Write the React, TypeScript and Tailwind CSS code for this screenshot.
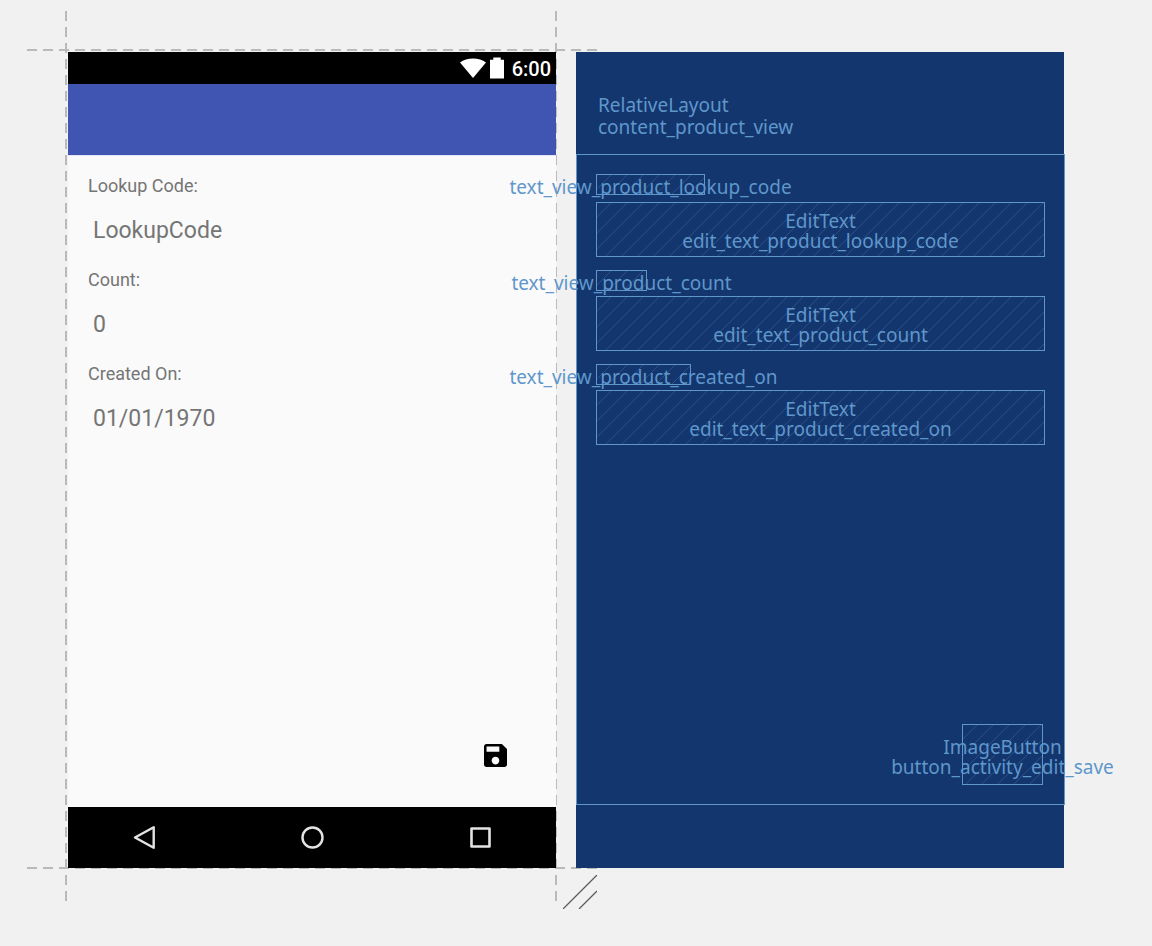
import { useId } from "react";

type Field = {
  id: string;
  label: string;
  value: string;
  viewId: string;
  viewBox: string;
};

const fields: Field[] = [
  { id: "product_lookup_code", label: "Lookup Code:", value: "LookupCode", viewId: "text_view_product_lookup_code", viewBox: "w-[109px] mb-[7px]" },
  { id: "product_count", label: "Count:", value: "0", viewId: "text_view_product_count", viewBox: "w-[51px] mb-[5px]" },
  { id: "product_created_on", label: "Created On:", value: "01/01/1970", viewId: "text_view_product_created_on", viewBox: "w-[95px] mb-[5px]" },
];

function Guides() {
  const horizontal =
    "absolute -left-[41px] -right-[41px] h-[2px] bg-[repeating-linear-gradient(90deg,#bababa_0_10px,transparent_10px_16px)]";
  const vertical =
    "absolute -top-[41px] -bottom-[33px] w-[2px] bg-[repeating-linear-gradient(180deg,#bababa_0_10px,transparent_10px_16px)]";
  return (
    <div aria-hidden="true">
      <div className={`${horizontal} -top-[3px]`} />
      <div className={`${horizontal} -bottom-[1px]`} />
      <div className={`${vertical} -left-[3px]`} />
      <div className={`${vertical} -right-[1px]`} />
      <svg className="absolute -right-[41px] -bottom-[41px] h-[34px] w-[34px]" viewBox="0 0 34 34" stroke="#5c5c5c" strokeWidth="1.3">
        <path d="M0 34 34 0M16 34 34 16" />
      </svg>
    </div>
  );
}

function StatusBar() {
  return (
    <div className="flex h-8 items-center justify-end bg-black pr-[5px] text-white">
      <svg className="mr-[4px] h-[21px] w-[26px]" viewBox="0 0 26 21" fill="#fff" aria-hidden="true">
        <path d="M0 4.6C3.4 1.8 8 .4 13 .4s9.600 1.400 13 4.200L13 20z" />
      </svg>
      <svg className="mr-[8px] h-[22px] w-[14px]" viewBox="0 0 14 22" fill="#fff" aria-hidden="true">
        <path d="M3.300 .5h7.400v2.300H14V21.500H0V2.800h3.300z" />
      </svg>
      <span className="pt-[2px] text-[20px] leading-6 font-medium">6:00</span>
    </div>
  );
}

function Device() {
  return (
    <section className="relative flex flex-1 flex-col bg-[#fafafa]">
      <StatusBar />
      <div className="h-[72px] border-b border-[#e3e5f4] bg-[#4054b2] bg-clip-padding" />
      <form className="flex flex-1 flex-col px-5 pt-[19px]">
        {fields.map((field) => (
          <div key={field.id} className="mb-3 flex flex-col">
            <label htmlFor={field.id} className="mb-[6px] text-[18px] leading-[21px] text-[#757575]">
              {field.label}
            </label>
            <input
              id={field.id}
              placeholder={field.value}
              className="h-[55px] w-full bg-transparent px-[5px] pt-[2px] text-[23px] text-[#757575] outline-none placeholder:text-[#757575]"
            />
          </div>
        ))}
        <button type="button" aria-label="Save" className="mt-auto mb-[21px] flex h-[61px] w-[81px] items-center justify-center self-end">
          <svg className="h-[23px] w-[23px]" viewBox="3 3 18 18" aria-hidden="true">
            <path d="M17 3H5c-1.110 0-2 .9-2 2v14c0 1.100.890 2 2 2h14c1.100 0 2-.9 2-2V7l-4-4zm-5 16c-1.660 0-3-1.340-3-3s1.340-3 3-3 3 1.340 3 3-1.340 3-3 3zm3-10H5V5h10v4z" />
          </svg>
        </button>
      </form>
      <nav className="flex h-[61px] items-center justify-between bg-black px-[63px]">
        <button type="button" aria-label="Back" className="flex w-[26px] justify-center">
          <svg className="h-[26px] w-[26px]" viewBox="0 0 26 26" fill="none" stroke="#e3e3e3" strokeWidth="2.400" strokeLinejoin="round">
            <path d="M22.700 2.200v20.600L4 12.500z" />
          </svg>
        </button>
        <button type="button" aria-label="Home" className="flex w-[26px] justify-center">
          <svg className="h-[26px] w-[26px]" viewBox="0 0 26 26" fill="none" stroke="#e3e3e3" strokeWidth="2.400">
            <circle cx="13.500" cy="12.500" r="10" />
          </svg>
        </button>
        <button type="button" aria-label="Overview" className="flex w-[26px] justify-center">
          <svg className="h-[26px] w-[26px]" viewBox="0 0 26 26" fill="none" stroke="#e3e3e3" strokeWidth="2.600" strokeLinejoin="round">
            <path d="M4.500 3.500h18v18h-18z" />
          </svg>
        </button>
      </nav>
    </section>
  );
}

function HatchedBox({ className, lines }: { className: string; lines: string[] }) {
  const pattern = useId();
  return (
    <div className={`relative flex flex-col items-center justify-center border border-[#5f97cb] ${className}`}>
      <svg className="absolute inset-0 h-full w-full" aria-hidden="true">
        <defs>
          <pattern id={pattern} x="-1" y="-1" width="16" height="16" patternUnits="userSpaceOnUse">
            <path d="M-1 17 17 -1M-1 1 1 -1M15 17 17 15" stroke="#2c4f87" strokeWidth="1" />
          </pattern>
        </defs>
        <rect width="100%" height="100%" fill={`url(#${pattern})`} />
      </svg>
      {lines.map((line) => (
        <span key={line} className="relative text-[19px] leading-5 whitespace-nowrap">
          {line}
        </span>
      ))}
    </div>
  );
}

function Blueprint() {
  return (
    <section className="relative flex flex-1 flex-col bg-[#14366e] font-['Noto_Sans',sans-serif] text-[#5f97cb]">
      <div className="flex h-[102px] flex-col px-[22px] pt-[42px] text-[19px] leading-[22px]">
        <span>RelativeLayout</span>
        <span>content_product_view</span>
      </div>
      <div className="-mr-px flex flex-1 flex-col border border-[#5f97cb] px-[19px] pt-[19px]">
        {fields.map((field) => (
          <div key={field.id} className="mb-[13px] flex flex-col">
            <HatchedBox className={`h-[21px] pt-1 ${field.viewBox}`} lines={[field.viewId]} />
            <HatchedBox className="h-[55px] pt-[3px]" lines={["EditText", `edit_text_${field.id}`]} />
          </div>
        ))}
        <HatchedBox className="mt-auto mr-[2px] mb-[19px] h-[61px] w-[81px] self-end pt-1" lines={["ImageButton", "button_activity_edit_save"]} />
      </div>
      <div className="h-[63px]" />
    </section>
  );
}

export default function App() {
  return (
    <main className="grid min-h-screen grid-cols-2 gap-5 overflow-hidden bg-[#f1f1f1] pt-[52px] pr-[88px] pb-[78px] pl-[68px] font-[Roboto,sans-serif]">
      <div className="relative flex min-w-0">
        <Guides />
        <Device />
      </div>
      <div className="relative flex min-w-0">
        <Blueprint />
      </div>
    </main>
  );
}
